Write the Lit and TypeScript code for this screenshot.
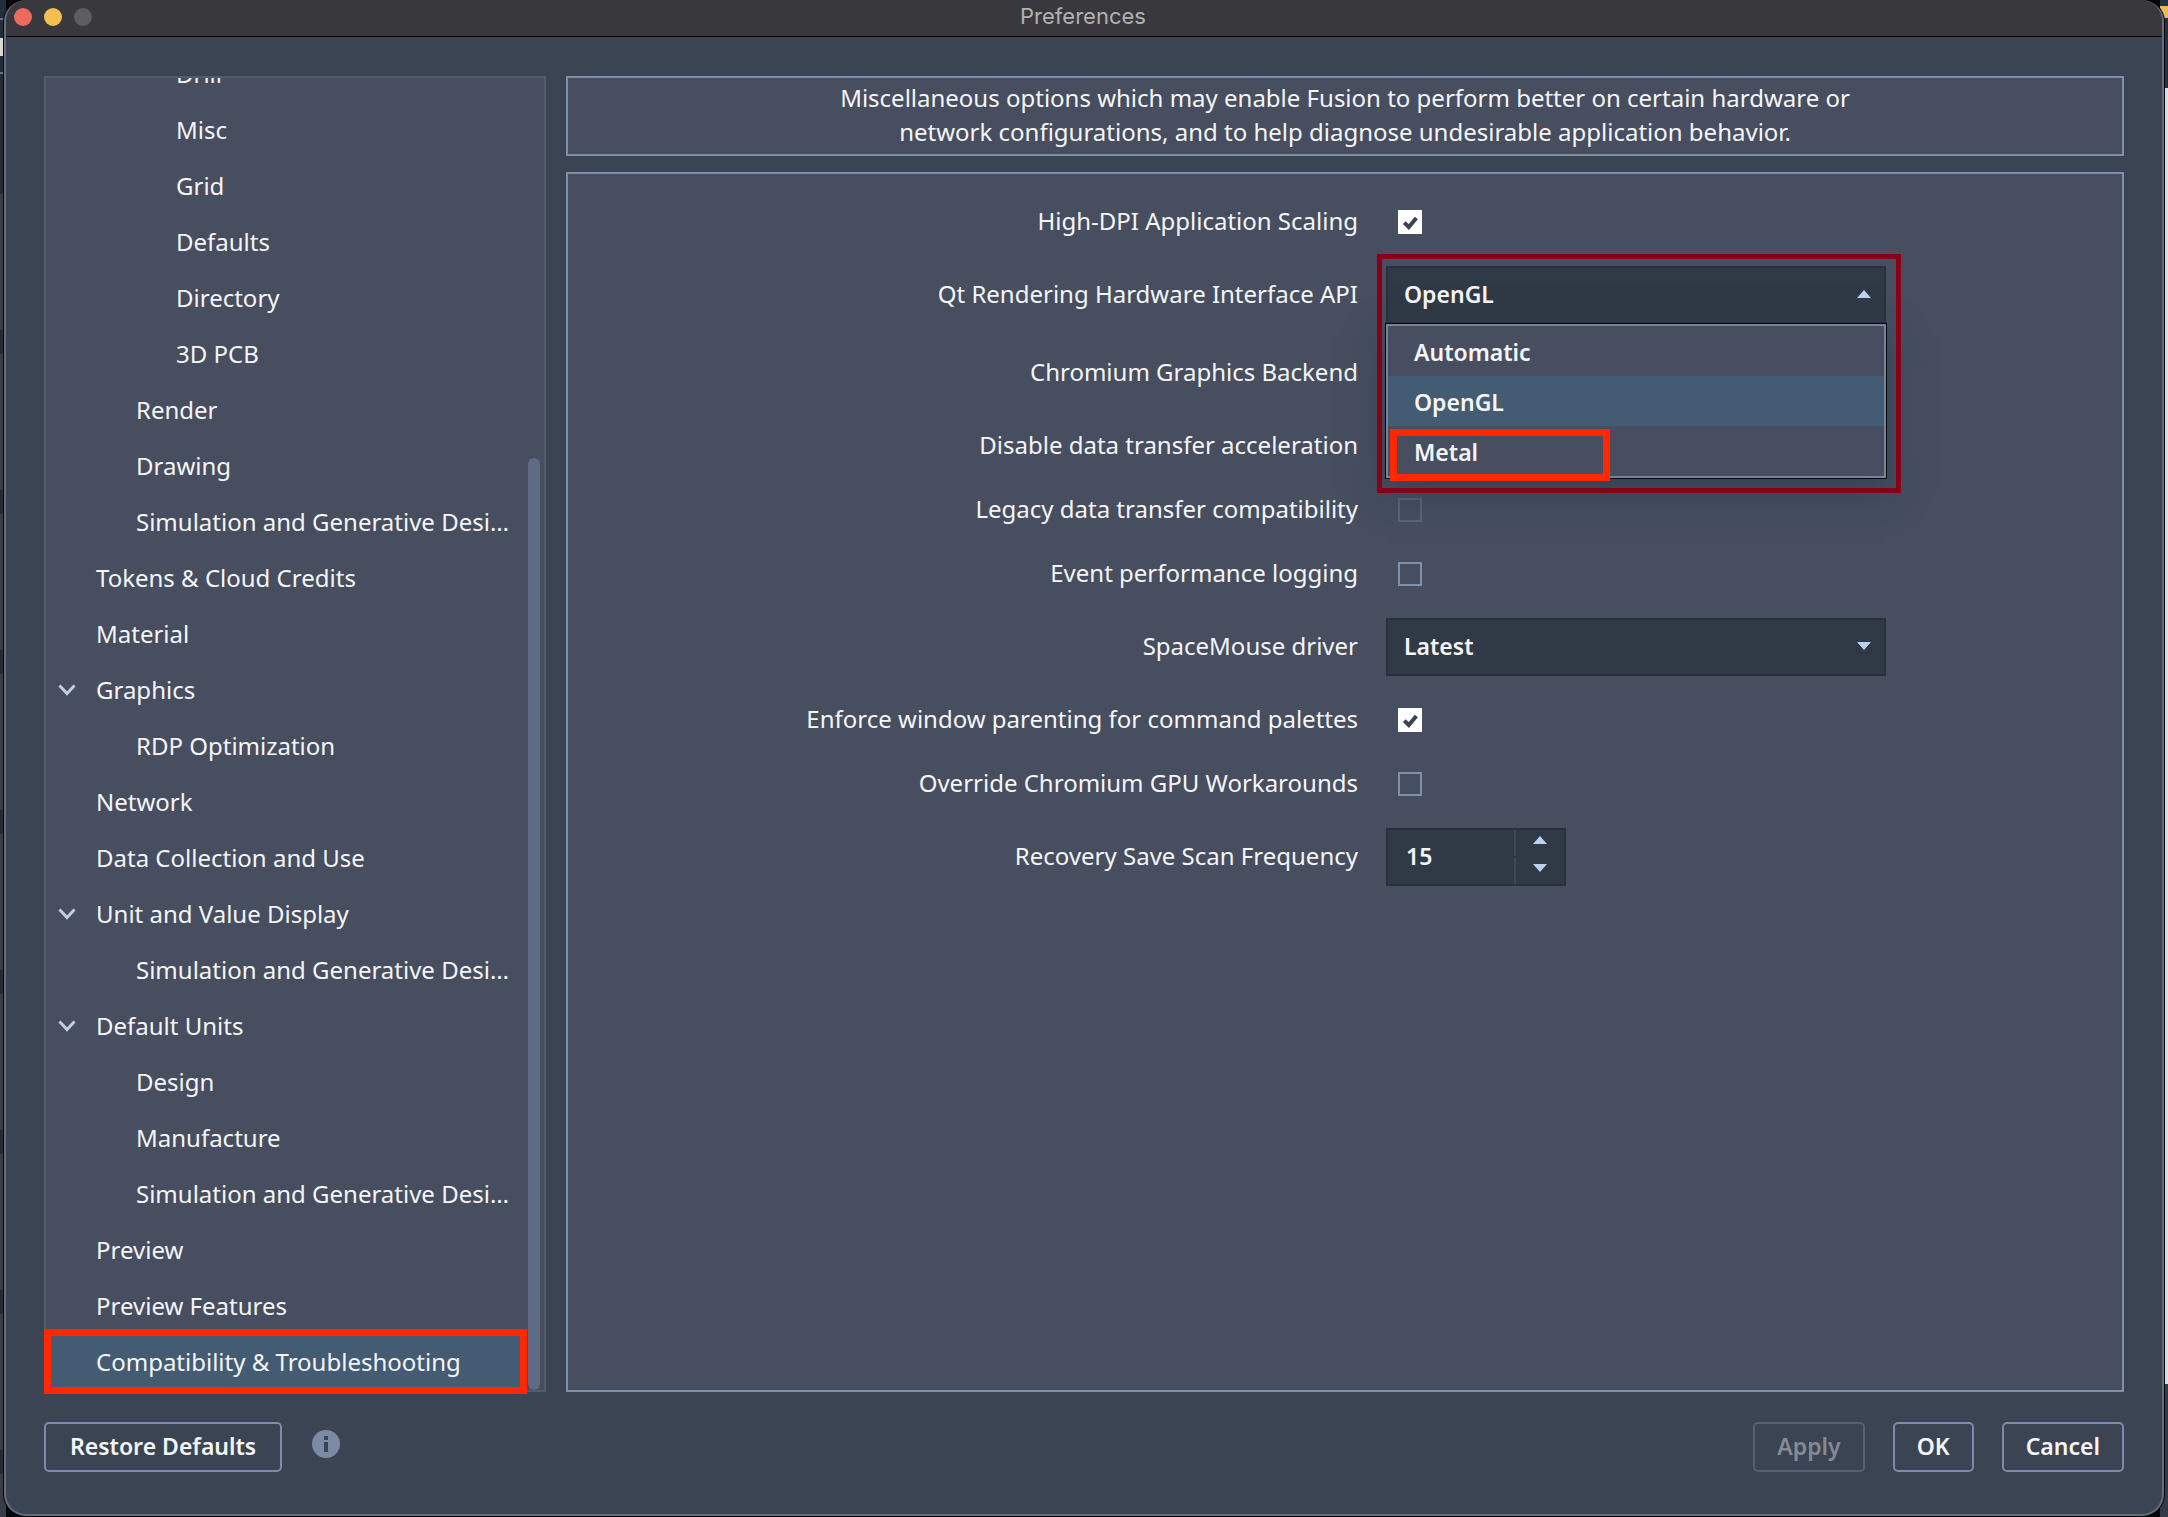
import { LitElement, html, css, svg, nothing } from "lit";
import { customElement, property, state } from "lit/decorators.js";
import { classMap } from "lit/directives/class-map.js";
import { styleMap } from "lit/directives/style-map.js";

interface TreeNode {
  label: string;
  level: 0 | 1 | 2;
  open?: boolean;
}

const TREE: TreeNode[] = [
  { label: "Drill", level: 2 },
  { label: "Misc", level: 2 },
  { label: "Grid", level: 2 },
  { label: "Defaults", level: 2 },
  { label: "Directory", level: 2 },
  { label: "3D PCB", level: 2 },
  { label: "Render", level: 1 },
  { label: "Drawing", level: 1 },
  { label: "Simulation and Generative Desi…", level: 1 },
  { label: "Tokens & Cloud Credits", level: 0 },
  { label: "Material", level: 0 },
  { label: "Graphics", level: 0, open: true },
  { label: "RDP Optimization", level: 1 },
  { label: "Network", level: 0 },
  { label: "Data Collection and Use", level: 0 },
  { label: "Unit and Value Display", level: 0, open: true },
  { label: "Simulation and Generative Desi…", level: 1 },
  { label: "Default Units", level: 0, open: true },
  { label: "Design", level: 1 },
  { label: "Manufacture", level: 1 },
  { label: "Simulation and Generative Desi…", level: 1 },
  { label: "Preview", level: 0 },
  { label: "Preview Features", level: 0 },
  { label: "Compatibility & Troubleshooting", level: 0 },
];

/* Share of the whole tree that the scroll thumb stands for. */
const THUMB_SHARE = 71;

const triangleUp = svg`<path d="M0 8 L7 0 L14 8 Z" />`;
const triangleDown = svg`<path d="M0 0 L14 0 L7 8 Z" />`;

const controlBase = css`
  * {
    box-sizing: border-box;
  }
  button,
  select,
  input {
    margin: 0;
    font: inherit;
    color: inherit;
  }
`;

@customElement("pref-tree")
export class PrefTree extends LitElement {
  @state() private selected = TREE.length - 1;

  static styles = [
    controlBase,
    css`
      :host {
        display: grid;
        grid-template-columns: minmax(0, 1fr) 12px;
        grid-template-rows: minmax(0, 1fr);
        column-gap: 2px;
        box-sizing: border-box;
        position: relative;
        min-height: 0;
        padding-right: 4px;
        border: 2px solid #525d6f;
        background: #464e60;
      }
      .list {
        display: flex;
        flex-direction: column;
        justify-content: flex-end;
        margin: 0;
        padding: 0;
        overflow: hidden;
        list-style: none;
      }
      .item {
        flex: none;
      }
      .row {
        display: flex;
        align-items: center;
        width: 100%;
        height: 56px;
        padding: 0 0 2px 12px;
        border: 0;
        background: none;
        text-align: left;
        white-space: nowrap;
      }
      .row.selected {
        background: #435c73;
      }
      .twisty {
        flex: none;
        width: 38px;
        height: 10px;
      }
      .twisty svg {
        display: block;
      }
      .level1 .twisty {
        width: 78px;
      }
      .level2 .twisty {
        width: 118px;
      }
      .thumb {
        align-self: end;
        border-radius: 6px;
        background: #5f6b84;
      }
      .mark {
        position: absolute;
        left: -2px;
        right: 17px;
        bottom: -4px;
        height: 65px;
        border: 7px solid #ff2800;
        pointer-events: none;
      }
    `,
  ];

  render() {
    return html`
      <ul class="list">
        ${TREE.map(
          (n, i) => html`<li class="item">
            <button
              type="button"
              class=${classMap({ row: true, [`level${n.level}`]: true, selected: i === this.selected })}
              @click=${() => (this.selected = i)}
            >
              <span class="twisty">
                ${n.open
                  ? html`<svg width="18" height="12" viewBox="0 0 18 12" fill="none" stroke="#c3cde2" stroke-width="3">
                      <path d="M1.5 1.5 L9 9.5 L16.5 1.5" />
                    </svg>`
                  : nothing}
              </span>
              <span>${n.label}</span>
            </button>
          </li>`
        )}
      </ul>
      <div class="thumb" style=${styleMap({ height: `${THUMB_SHARE}%` })}></div>
      <div class="mark"></div>
    `;
  }
}

@customElement("pref-form")
export class PrefForm extends LitElement {
  @property({ type: Boolean }) menuOpen = true;

  static styles = [
    controlBase,
    css`
      :host {
        display: block;
        box-sizing: border-box;
        min-height: 0;
        padding-top: 28px;
        border: 2px solid #7f91aa;
        background: #464e60;
      }
      .form {
        display: flex;
        flex-direction: column;
        gap: 24px;
      }
      .row {
        display: grid;
        grid-template-columns: minmax(0, 790fr) minmax(0, 736fr);
        column-gap: 28px;
        align-items: center;
        min-height: 40px;
      }
      .row.spaced {
        padding-bottom: 4px;
      }
      .label {
        justify-self: end;
        padding-bottom: 3px;
        line-height: 34px;
      }
      .check {
        display: grid;
        width: 24px;
        height: 24px;
        margin-left: 12px;
      }
      .check > * {
        grid-area: 1 / 1;
      }
      .box {
        appearance: none;
        width: 24px;
        height: 24px;
        border: 2px solid #7f91aa;
        background: transparent;
      }
      .box:checked {
        border-color: #fff;
        background: #fff;
      }
      .box:disabled {
        border-color: #5a677a;
      }
      .tick {
        display: none;
        pointer-events: none;
      }
      .box:checked + .tick {
        display: block;
      }
      .field {
        display: grid;
        grid-template-columns: minmax(0, 1fr) auto;
        align-items: center;
        position: relative;
        max-width: 500px;
        height: 58px;
        font-size: 23px;
        font-weight: 600;
      }
      .field.small {
        height: 50px;
      }
      .field.open {
        z-index: 1;
      }
      .select {
        grid-area: 1 / 1 / 2 / 3;
        appearance: none;
        width: 100%;
        height: 100%;
        padding: 0 16px 2px;
        border: 2px solid #28313b;
        border-radius: 0;
        background: #303a46;
      }
      .arrow {
        grid-area: 1 / 2;
        margin: 0 15px 2px 0;
        fill: #bad2ef;
        pointer-events: none;
      }
      .menu {
        position: absolute;
        top: 58px;
        left: 0;
        right: 0;
        margin: 0;
        padding: 0;
        border: 2px solid #79839a;
        outline: 1px solid #05080c;
        background: #464e60;
        box-shadow: 0 14px 36px rgba(42, 56, 68, 0.6);
        list-style: none;
      }
      .option {
        height: 50px;
        padding: 2px 0 0 26px;
        line-height: 48px;
      }
      .option.current {
        background: #435c73;
      }
      .mark-outer {
        position: absolute;
        top: -12px;
        left: -9px;
        right: -15px;
        height: 239px;
        border: 5px solid #870015;
        pointer-events: none;
      }
      .mark-inner {
        position: absolute;
        top: 163px;
        left: 4px;
        width: 220px;
        height: 52px;
        border: 7px solid #ff2800;
        pointer-events: none;
      }
      .spin {
        display: grid;
        grid-template-columns: minmax(0, 1fr) 50px;
        grid-template-rows: 27px 27px;
        width: 180px;
        height: 58px;
        border: 2px solid #28313b;
        background: #303a46;
        font-size: 23px;
        font-weight: 600;
      }
      .number {
        grid-row: 1 / 3;
        appearance: textfield;
        width: 100%;
        padding: 0 18px 2px;
        border: 0;
        background: none;
      }
      .number::-webkit-inner-spin-button {
        display: none;
      }
      .step {
        display: grid;
        place-items: center;
        padding: 0 0 6px;
        border: 0;
        border-left: 2px solid #3f4956;
        background: none;
      }
      .step svg {
        display: block;
        fill: #bad2ef;
      }
      .step.up {
        margin-bottom: 1px;
      }
      .step.down {
        margin-top: 1px;
      }
    `,
  ];

  private check(id: string, label: string, checked = false, disabled = false) {
    return html`<div class="row">
      <label class="label" for=${id}>${label}</label>
      <span class="check">
        <input class="box" type="checkbox" id=${id} ?checked=${checked} ?disabled=${disabled} />
        <svg class="tick" width="24" height="24" viewBox="0 0 24 24" fill="none" stroke="#3b4453" stroke-width="4">
          <path d="M6.3 12.6 L10.8 17 L18.4 8" />
        </svg>
      </span>
    </div>`;
  }

  private arrow(up: boolean) {
    return html`<svg class="arrow" width="14" height="8" viewBox="0 0 14 8">${up ? triangleUp : triangleDown}</svg>`;
  }

  render() {
    return html`<form class="form" @submit=${(e: Event) => e.preventDefault()}>
      ${this.check("dpi", "High-DPI Application Scaling", true)}
      <div class="row">
        <label class="label" for="rhi">Qt Rendering Hardware Interface API</label>
        <div class="field open">
          <select class="select" id="rhi">
            <option>OpenGL</option>
          </select>
          ${this.arrow(this.menuOpen)}
          ${this.menuOpen
            ? html`<ul class="menu" role="listbox">
                  <li class="option" role="option">Automatic</li>
                  <li class="option current" role="option" aria-selected="true">OpenGL</li>
                  <li class="option" role="option">Metal</li>
                </ul>
                <div class="mark-outer"></div>
                <div class="mark-inner"></div>`
            : nothing}
        </div>
      </div>
      <div class="row spaced">
        <label class="label" for="backend">Chromium Graphics Backend</label>
        <div class="field small">
          <select class="select" id="backend"></select>
        </div>
      </div>
      ${this.check("accel", "Disable data transfer acceleration")}
      ${this.check("legacy", "Legacy data transfer compatibility", false, true)}
      ${this.check("events", "Event performance logging")}
      <div class="row">
        <label class="label" for="mouse">SpaceMouse driver</label>
        <div class="field">
          <select class="select" id="mouse">
            <option>Latest</option>
          </select>
          ${this.arrow(false)}
        </div>
      </div>
      ${this.check("parenting", "Enforce window parenting for command palettes", true)}
      ${this.check("gpu", "Override Chromium GPU Workarounds")}
      <div class="row">
        <label class="label" for="freq">Recovery Save Scan Frequency</label>
        <div class="spin">
          <input class="number" id="freq" type="number" value="15" />
          <button class="step up" type="button" aria-label="Increase">
            <svg width="14" height="8" viewBox="0 0 14 8">${triangleUp}</svg>
          </button>
          <button class="step down" type="button" aria-label="Decrease">
            <svg width="14" height="8" viewBox="0 0 14 8">${triangleDown}</svg>
          </button>
        </div>
      </div>
    </form>`;
  }
}

@customElement("app-root")
export class AppRoot extends LitElement {
  static styles = [
    controlBase,
    css`
      :host {
        display: flex;
        box-sizing: border-box;
        height: 100vh;
        padding: 0 4px 1px;
        color: #f5f5f5;
        font-family: "Noto Sans", "Open Sans", sans-serif;
        font-size: 24px;
        background:
          linear-gradient(
              #262d3a 18px, #66758a 18px 20px, #262d3a 20px 38px, #d8d8d6 38px 56px, #262d3a 56px 72px,
              #66758a 72px 74px, #262a33 74px 194px, transparent 194px
            )
            left / 6px 100% no-repeat,
          repeating-linear-gradient(#363d47 0 10px, #262b34 10px 34px, #363d47 34px 160px) left / 6px 100% no-repeat,
          linear-gradient(
              #26303f 6px, #ecb95c 6px 18px, #26303f 18px 88px, #dcdddd 88px 1384px, #343c4a 1384px
            )
            right / 8px 100% no-repeat,
          #05070a;
      }
      .window {
        display: flex;
        flex-direction: column;
        flex: 1;
        min-width: 0;
        overflow: hidden;
        border: solid #666e79;
        border-width: 0 2px 2px;
        border-radius: 22px;
        background: #3b4453;
        box-shadow: 0 0 0 1px #05070a;
      }
      .titlebar {
        display: grid;
        grid-template-columns: 1fr auto 1fr;
        align-items: center;
        flex: none;
        height: 37px;
        padding: 0 10px 4px 8px;
        border-bottom: 1px solid #000;
        background: #39393d;
        color: #b1b1b3;
        font-family: Inter, "Liberation Sans", sans-serif;
        font-size: 22px;
        line-height: 32px;
      }
      .lights {
        display: flex;
        gap: 12px;
        padding-top: 2px;
      }
      .light {
        width: 18px;
        height: 18px;
        padding: 0;
        border: 0;
        border-radius: 50%;
        background: #5e5e62;
      }
      .light.close {
        background: #ed6a5e;
      }
      .light.minimize {
        background: #f5bf4f;
      }
      .title {
        margin: 0;
        font: inherit;
      }
      .content {
        display: grid;
        grid-template-columns: 502px minmax(0, 1fr);
        grid-template-rows: minmax(0, 1fr);
        column-gap: 20px;
        flex: 1;
        min-height: 0;
        padding: 39px 38px 0;
      }
      .page {
        display: grid;
        grid-template-rows: auto minmax(0, 1fr);
        row-gap: 16px;
        min-width: 0;
      }
      .intro {
        display: flex;
        justify-content: center;
        padding: 3px 0 5px;
        border: 2px solid #7f91aa;
        background: #464e60;
        text-align: center;
        line-height: 34px;
      }
      .intro p {
        max-width: 1040px;
        margin: 0;
      }
      .footer {
        display: flex;
        align-items: center;
        flex: none;
        gap: 28px;
        padding: 30px 38px 42px;
      }
      .button {
        height: 50px;
        padding: 0 22px 2px;
        border: 2px solid #7d8ba8;
        border-radius: 5px;
        background: none;
        font-size: 23px;
        font-weight: 600;
      }
      .button.wide {
        padding: 0 24px 2px;
      }
      .button:disabled {
        border-color: #566175;
        color: #858a93;
      }
      .info {
        width: 28px;
        height: 28px;
        margin: 0 auto 6px 2px;
        padding: 0;
        border: 0;
        background: none;
      }
      .info svg {
        display: block;
      }
    `,
  ];

  render() {
    return html`<div class="window">
      <header class="titlebar">
        <div class="lights">
          <button class="light close" type="button" aria-label="Close"></button>
          <button class="light minimize" type="button" aria-label="Minimize"></button>
          <button class="light" type="button" aria-label="Zoom" disabled></button>
        </div>
        <h1 class="title">Preferences</h1>
      </header>
      <main class="content">
        <pref-tree></pref-tree>
        <section class="page">
          <div class="intro">
            <p>
              Miscellaneous options which may enable Fusion to perform better on certain hardware or network
              configurations, and to help diagnose undesirable application behavior.
            </p>
          </div>
          <pref-form></pref-form>
        </section>
      </main>
      <footer class="footer">
        <button class="button wide" type="button">Restore Defaults</button>
        <button class="info" type="button" aria-label="Information">
          <svg width="28" height="28" viewBox="0 0 28 28">
            <circle cx="14" cy="14" r="14" fill="#7d8aa5" />
            <path d="M12 6h4v4h-4z M12 12h4v10h-4z" fill="#3b4453" />
          </svg>
        </button>
        <button class="button" type="button" disabled>Apply</button>
        <button class="button" type="button">OK</button>
        <button class="button" type="button">Cancel</button>
      </footer>
    </div>`;
  }
}
